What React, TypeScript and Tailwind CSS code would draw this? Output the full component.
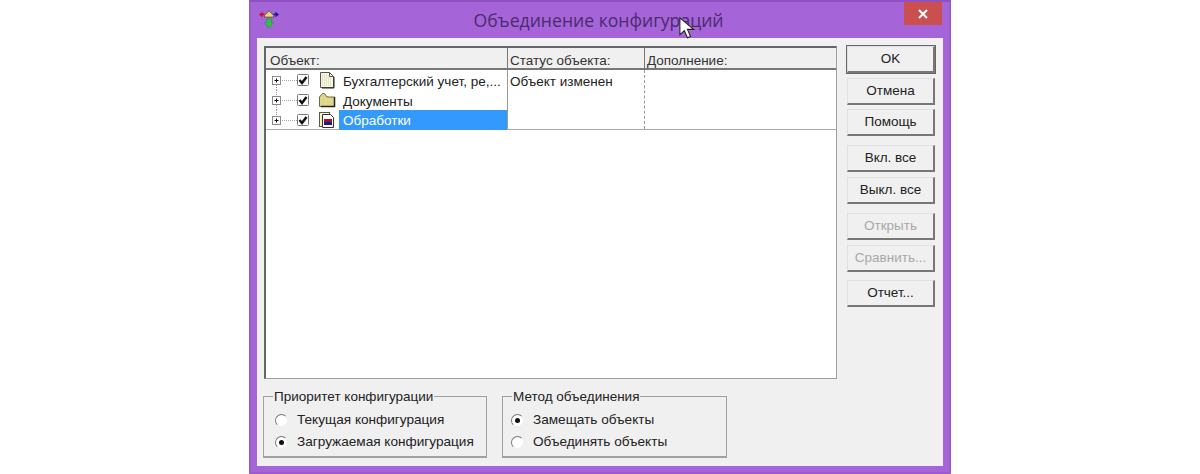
function AppIcon() {
  return (
    <svg width="22" height="22" viewBox="0 0 24 24">
      <path d="M12 3l5 5v2H7V8z" fill="#e8d27a" stroke="#5a5030" strokeWidth="1" />
      <path d="M1 7l4-3v2h2v2H5v2z" fill="#c8102e" />
      <path d="M23 7l-4-3v2h-2v2h2v2z" fill="#1a1aa8" />
      <path d="M9.500 12h5v4h2.500l-5 6-5-6h2.500z" fill="#2fc24a" stroke="#2a7a3a" strokeWidth="0.500" />
    </svg>
  )
}

function Cursor() {
  return (
    <svg width="16" height="25" viewBox="0 0 18 26" className="absolute left-[428px] top-[14px]">
      <path d="M1 1v19l5-4.500 3.500 8 3.500-1.500-3.500-8h7z" fill="#fff" stroke="#222" strokeWidth="1.200" />
    </svg>
  )
}

function TreePrefix({ first, last }: { first?: boolean; last?: boolean }) {
  return (
    <svg width="44" height="20" viewBox="0 0 44 20" className="shrink-0">
      {!first && <line x1="6.500" y1="0" x2="6.500" y2="5" stroke="#999" strokeDasharray="1 1" />}
      {!last && <line x1="6.500" y1="15" x2="6.500" y2="20" stroke="#999" strokeDasharray="1 1" />}
      <line x1="12" y1="10.500" x2="27" y2="10.500" stroke="#aaa" strokeDasharray="1 1" />
      <rect x="2.500" y="6.500" width="8" height="8" fill="#fff" stroke="#8a8a8a" />
      <path d="M4.500 10.500h4M6.500 8.500v4" stroke="#111" />
      <rect x="27.500" y="4.500" width="11" height="11" fill="#fff" stroke="#777" rx="1" />
      <path d="M29.500 10l2.500 3 4.500-6" fill="none" stroke="#111" strokeWidth="2.500" />
    </svg>
  )
}

function DocIcon() {
  return (
    <svg width="16" height="18" viewBox="0 0 16 18">
      <path d="M1.500 1.500h9l4 4v11h-13z" fill="#faf7d8" stroke="#555" />
      <path d="M3 4h6M3 6h9M3 8h9M3 10h9M3 12h9M3 14h9" stroke="#d0d0d0" strokeDasharray="1 1" />
      <path d="M10.500 1.500v4h4" fill="none" stroke="#555" />
      <path d="M15 6v11H3" fill="none" stroke="#222" />
    </svg>
  )
}

function FolderIcon() {
  return (
    <svg width="18" height="16" viewBox="0 0 18 16">
      <path d="M1.500 14.500V5l3-3.500h2L9 5h7.500v9.500z" fill="#e0d888" stroke="#6a6840" />
      <path d="M16.500 5v9.500H3" fill="none" stroke="#222" strokeWidth="1.500" />
    </svg>
  )
}

function ProcessIcon() {
  return (
    <svg width="18" height="18" viewBox="0 0 18 18">
      <rect x="1.500" y="1.500" width="10" height="14" fill="#faf3b8" stroke="#555" />
      <path d="M4.500 3.500h8l3 3v10h-11z" fill="#fff" stroke="#333" />
      <rect x="6" y="8" width="8" height="3" fill="#a01030" />
      <rect x="6" y="11" width="8" height="3" fill="#1a1a80" />
    </svg>
  )
}

function Button({ label, disabled, primary, className }: { label: string; disabled?: boolean; primary?: boolean; className?: string }) {
  return (
    <div
      className={`flex h-[27px] w-[88px] items-center justify-center border border-t-[#e0e0e0] border-l-[#e0e0e0] border-r-[#777] border-b-[#777] border-b-2 border-r-2 bg-[#f0f0f0] text-[13.500px] ${primary ? 'outline outline-1 outline-[#666]' : ''} ${disabled ? 'text-[#a8a8a8]' : 'text-[#222]'} ${className ?? ''}`}
    >
      {label}
    </div>
  )
}

function Radio({ checked, label }: { checked?: boolean; label: string }) {
  return (
    <div className="flex h-[22px] items-center text-[13.600px] text-[#222]">
      <div className="mr-[9px] flex h-[13px] w-[13px] items-center justify-center rounded-full border border-t-[#777] border-l-[#777] border-r-[#eee] border-b-[#eee] bg-white">
        {checked && <div className="h-[5px] w-[5px] rounded-full bg-[#111]" />}
      </div>
      {label}
    </div>
  )
}

function Group({ title, className, children }: { title: string; className: string; children: React.ReactNode }) {
  return (
    <div className={`relative h-[62px] border border-[#a0a0a0] border-b-2 pt-[12px] ${className}`}>
      <div className="absolute left-[9px] top-[-8px] bg-[#f0f0f0] pl-[1px] pr-[1px] text-[13.500px] leading-[15px] text-[#222]">{title}</div>
      {children}
    </div>
  )
}

const rows = [
  { text: 'Бухгалтерский учет, ре,...', icon: <DocIcon />, pad: 'pt-[4px]' },
  { text: 'Документы', icon: <FolderIcon />, pad: 'pt-[4px]' },
  { text: 'Обработки', icon: <ProcessIcon />, selected: true, pad: 'pt-[3px]' },
]

export default function App() {
  return (
    <div className="flex h-[474px] w-[1200px] justify-center overflow-hidden bg-white font-['Liberation_Sans',sans-serif]">
      <div className="relative flex h-[474px] w-[702px] flex-col border-x-2 border-t-2 border-b-2 border-x-[#9a5ccb] border-t-[#8e4fc0] border-b-[#9a5ccb] bg-[#a664d9] px-[6px]">
        {/* Title bar */}
        <div className="flex h-[36px] shrink-0 items-start">
          <div className="w-[26px] pl-[1px] pt-[6px]">
            <AppIcon />
          </div>
          <div className="flex-1 pt-[5px] pl-[10px] text-center font-['Open_Sans',sans-serif] text-[17.600px] leading-[26px] text-[#4b2a6e]">
            Объединение конфигураций
          </div>
          <div className="mr-[1px] flex h-[23px] w-[38px] items-center justify-center bg-[#c9504f] text-white">
            <svg width="10" height="10" viewBox="0 0 10 10">
              <path d="M1 1l8 8M9 1l-8 8" stroke="#fff" strokeWidth="2" />
            </svg>
          </div>
        </div>
        <Cursor />

        {/* Client area */}
        <div className="flex h-[428px] flex-col bg-[#f0f0f0] pl-[6px] pt-[8px]">
          <div className="ml-[1px] flex h-[334px] gap-[10px]">
            {/* List */}
            <div className="flex h-[333px] w-[573px] flex-col border border-[#a0a0a0] border-l-2 border-t-2 border-l-[#666] border-t-[#666] bg-white">
              <div className="flex h-[22px] shrink-0 border-b-2 border-[#777] bg-[#f0f0f0] text-[13.500px] leading-[25px] text-[#333]">
                <div className="w-[242px] border-r border-[#777] pl-[4px]">Объект:</div>
                <div className="w-[137px] border-r border-[#777] pl-[2px]">Статус объекта:</div>
                <div className="flex-1 pl-[2px]">Дополнение:</div>
              </div>
              <div className="flex h-[60px] shrink-0 border-b border-[#aaa]">
                <div className="w-[242px] border-r border-[#999] pl-[4px]">
                  {rows.map((r, i) => (
                    <div key={r.text} className="flex h-[20px] items-center">
                      <TreePrefix first={i === 0} last={i === rows.length - 1} />
                      <div className="flex w-[25px] shrink-0 justify-center pl-[1px]">{r.icon}</div>
                      <div
                        className={`flex h-[20px] flex-1 items-center pl-[4px] text-[13.500px] ${r.pad} ${r.selected ? 'bg-[#3399ff] text-white' : 'text-[#222]'}`}
                      >
                        {r.text}
                      </div>
                    </div>
                  ))}
                </div>
                <div className="w-[137px] border-r border-dashed border-[#999] pl-[2px] text-[13.500px] leading-[24px] text-[#222]">
                  Объект изменен
                </div>
                <div className="flex-1" />
              </div>
            </div>

            {/* Buttons */}
            <div className="flex w-[88px] flex-col">
              <Button label="OK" primary />
              <Button label="Отмена" className="mt-[5px]" />
              <Button label="Помощь" className="mt-[4px]" />
              <Button label="Вкл. все" className="mt-[9px]" />
              <Button label="Выкл. все" className="mt-[5px]" />
              <Button label="Открыть" disabled className="mt-[9px]" />
              <Button label="Сравнить..." disabled className="mt-[5px]" />
              <Button label="Отчет..." className="mt-[8px]" />
            </div>
          </div>

          {/* Groups */}
          <div className="mt-[16px] flex gap-[15px]">
            <Group title="Приоритет конфигурации" className="w-[224px] pl-[11px]">
              <Radio label="Текущая конфигурация" />
              <Radio checked label="Загружаемая конфигурация" />
            </Group>
            <Group title="Метод объединения" className="w-[225px] pl-[8px]">
              <Radio checked label="Замещать объекты" />
              <Radio label="Объединять объекты" />
            </Group>
          </div>
        </div>
      </div>
    </div>
  )
}
